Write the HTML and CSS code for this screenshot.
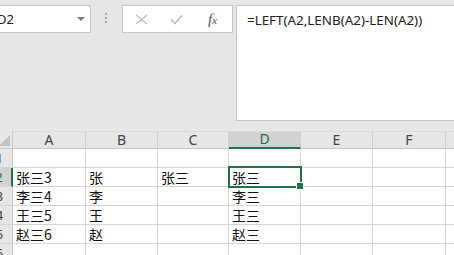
FILE: index.html
```html
<!DOCTYPE html>
<html lang="zh-CN">
<head>
    <meta charset="UTF-8">
    <title>Sheet1</title>
    <link rel="stylesheet" href="styles.css">
</head>
<body>
    <div class="formula-area">
        <div class="name-box">
            <span class="name">D2</span>
            <span class="arrow"></span>
        </div>
        <div class="grip">
            <span></span><span></span><span></span>
        </div>
        <div class="icon-box">
            <svg class="icon" width="13" height="11" viewBox="0 0 13 11">
                <path d="M1 1 L12 10 M12 1 L1 10" stroke="#bdbdbd" stroke-width="1.3" fill="none"/>
            </svg>
            <svg class="icon" width="13" height="11" viewBox="0 0 13 11">
                <path d="M1 5.5 L4.8 9.5 L12 1.5" stroke="#bdbdbd" stroke-width="1.6" fill="none"/>
            </svg>
            <span class="fx">f<small>x</small></span>
        </div>
        <div class="formula-box">=LEFT(A2,LENB(A2)-LEN(A2))</div>
    </div>

    <div class="sheet">
        <div class="corner"><span class="tri"></span></div>
        <div class="col-head">A</div>
        <div class="col-head">B</div>
        <div class="col-head">C</div>
        <div class="col-head active">D</div>
        <div class="col-head">E</div>
        <div class="col-head">F</div>
        <div class="col-head"></div>

        <div class="row-head">1</div>
        <div class="cell"></div><div class="cell"></div><div class="cell"></div><div class="cell"></div><div class="cell"></div><div class="cell"></div><div class="cell"></div>

        <div class="row-head active">2</div>
        <div class="cell">张三3</div><div class="cell">张</div><div class="cell">张三</div><div class="cell selected">张三</div><div class="cell"></div><div class="cell"></div><div class="cell"></div>

        <div class="row-head">3</div>
        <div class="cell">李三4</div><div class="cell">李</div><div class="cell"></div><div class="cell">李三</div><div class="cell"></div><div class="cell"></div><div class="cell"></div>

        <div class="row-head">4</div>
        <div class="cell">王三5</div><div class="cell">王</div><div class="cell"></div><div class="cell">王三</div><div class="cell"></div><div class="cell"></div><div class="cell"></div>

        <div class="row-head">5</div>
        <div class="cell">赵三6</div><div class="cell">赵</div><div class="cell"></div><div class="cell">赵三</div><div class="cell"></div><div class="cell"></div><div class="cell"></div>

        <div class="row-head">6</div>
        <div class="cell"></div><div class="cell"></div><div class="cell"></div><div class="cell"></div><div class="cell"></div><div class="cell"></div><div class="cell"></div>
    </div>
</body>
</html>
```

FILE: styles.css
```css
* {
    margin: 0;
    padding: 0;
    box-sizing: border-box;
}
body {
    width: 454px;
    height: 255px;
    overflow: hidden;
    background: #e6e6e6;
    font-family: "Noto Sans", "Noto Sans CJK SC", sans-serif;
    color: #222;
}

/* formula bar */
.formula-area {
    display: flex;
    align-items: flex-start;
    height: 131px;
    padding-top: 5px;
}
.formula-area > * {
    flex-shrink: 0;
}
.name-box {
    display: flex;
    align-items: center;
    justify-content: space-between;
    width: 102px;
    height: 28px;
    margin-left: -11px;
    padding: 0 5px 0 7px;
    background: #fff;
    border: 1px solid #c6c6c6;
    font-size: 13px;
}
.arrow {
    width: 0;
    height: 0;
    border-left: 4px solid transparent;
    border-right: 4px solid transparent;
    border-top: 4px solid #777;
}
.grip {
    display: flex;
    flex-direction: column;
    gap: 2px;
    width: 31px;
    padding: 8px 0 0 14px;
}
.grip span {
    width: 2px;
    height: 2px;
    background: #a8a8a8;
}
.icon-box {
    display: flex;
    align-items: center;
    width: 111px;
    height: 28px;
    padding-left: 12px;
    gap: 22px;
    background: #fff;
    border: 1px solid #c6c6c6;
}
.fx {
    font-family: "Liberation Serif", serif;
    font-style: italic;
    font-size: 15px;
    color: #555;
    margin-left: 3px;
}
.fx small {
    font-size: 11px;
}
.formula-box {
    width: 240px;
    height: 116px;
    margin-left: 3px;
    padding: 5px 10px;
    background: #fff;
    border: 1px solid #c6c6c6;
    font-size: 13.4px;
    color: #222;
}

/* grid */
.sheet {
    display: grid;
    grid-template-columns: 26px 73px 72px 71px 72px 72px 73px 40px;
    grid-template-rows: 18px repeat(6, 19px);
    margin-left: -13px;
    background: #fff;
}
.corner,
.col-head,
.row-head {
    background: #e6e6e6;
    color: #444;
    font-size: 14px;
}
.corner {
    display: flex;
    justify-content: flex-end;
    align-items: flex-end;
    padding: 0 2px 2px 0;
    border-right: 1px solid #c8c8c8;
    border-bottom: 1px solid #c8c8c8;
}
.tri {
    width: 0;
    height: 0;
    border-left: 11px solid transparent;
    border-bottom: 11px solid #c2c2c2;
}
.col-head {
    display: flex;
    justify-content: center;
    align-items: flex-end;
    line-height: 17px;
    border-top: 1px solid #dcdcdc;
    border-right: 1px solid #d0d0d0;
    border-bottom: 1px solid #c8c8c8;
}
.col-head.active {
    background: #d2d2d2;
    color: #217346;
    border-bottom: 2px solid #217346;
}
.row-head {
    display: flex;
    justify-content: center;
    align-items: center;
    font-size: 13px;
    border-right: 1px solid #c8c8c8;
    border-bottom: 1px solid #d4d4d4;
}
.row-head.active {
    background: #d2d2d2;
    color: #217346;
    border-right: 2px solid #217346;
}
.cell {
    display: flex;
    align-items: flex-end;
    padding: 0 0 0 3px;
    font-family: "Noto Sans CJK SC", sans-serif;
    font-size: 14px;
    line-height: 18px;
    color: #111;
    border-right: 1px solid #d4d4d4;
    border-bottom: 1px solid #d4d4d4;
}
.cell.selected {
    position: relative;
}
.cell.selected::before {
    content: "";
    position: absolute;
    top: -2px;
    left: -1px;
    right: -2px;
    bottom: -2px;
    border: 2px solid #217346;
}
.cell.selected::after {
    content: "";
    position: absolute;
    right: -4px;
    bottom: -4px;
    width: 6px;
    height: 6px;
    background: #217346;
    border: 1px solid #fff;
}
```
